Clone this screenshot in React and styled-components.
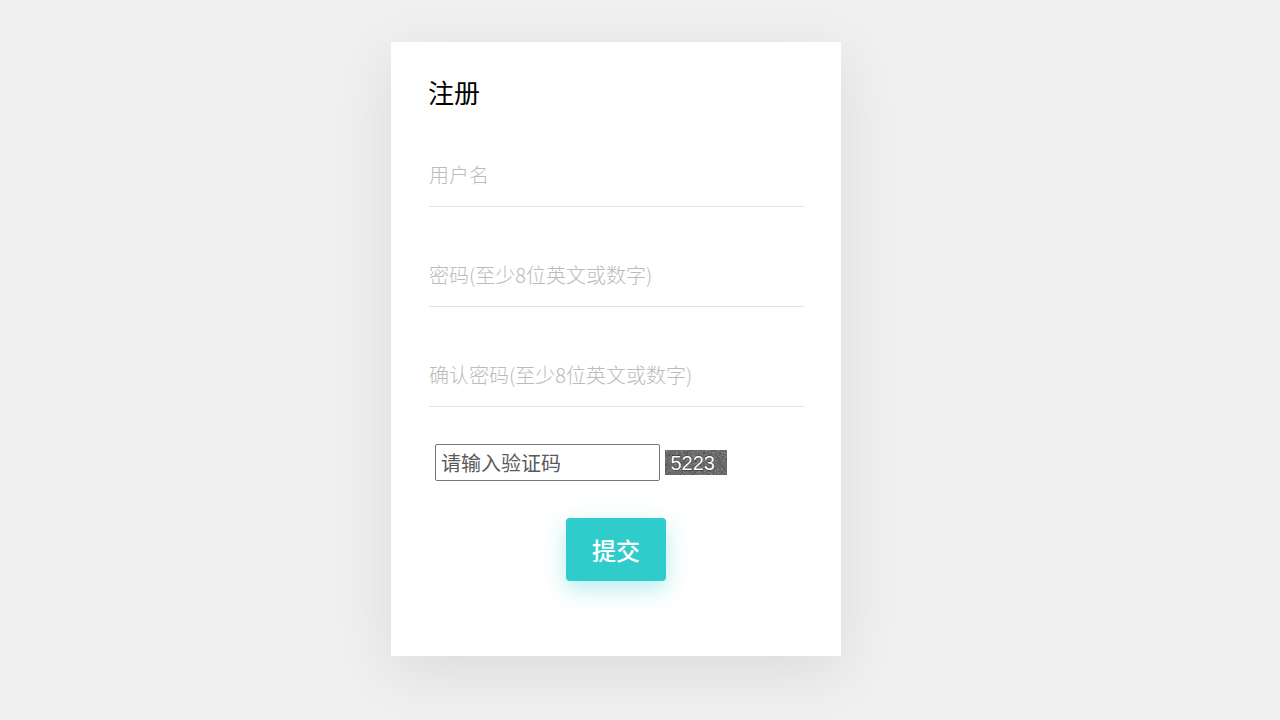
import React from "react";
import styled, { createGlobalStyle } from "styled-components";

const Global = createGlobalStyle`
  html, body { margin: 0; padding: 0; background: #f0f0f0; }
  body { font-family: "Noto Sans CJK SC", "Liberation Sans", sans-serif; }
  * { box-sizing: border-box; }
`;

const Page = styled.div`
  display: flex;
  justify-content: center;
  padding: 42px 48px 0 0;
  min-height: 720px;
`;

const Card = styled.form`
  width: 450px;
  height: 614px;
  background: #fff;
  padding: 30px 37px 0 38px;
  box-shadow: 0 15px 60px rgba(0, 0, 0, 0.09);
  display: flex;
  flex-direction: column;
`;

const Title = styled.h2`
  margin: 0 0 0 -1px;
  font-size: 26px;
  line-height: 40px;
  font-weight: 400;
  color: #000;
`;

const Field = styled.input`
  display: block;
  width: 100%;
  height: 61px;
  margin-top: ${(p) => p.$gap}px;
  border: none;
  border-bottom: 1px solid #e3e3e3;
  outline: none;
  padding: 0 0 3px;
  font-family: inherit;
  font-size: 20px;
  font-weight: 300;
  color: #333;
  background: transparent;
  &::placeholder { color: #bbbbbb; }
`;

const CaptchaRow = styled.div`
  display: flex;
  align-items: center;
  gap: 5px;
  margin-top: 37px;
  padding-left: 6px;
`;

const CaptchaInput = styled.input`
  width: 225px;
  height: 37px;
  border: 1px solid #767676;
  border-radius: 2px;
  padding: 0 5px;
  font-family: inherit;
  font-size: 20px;
  color: #333;
  outline: none;
  &::placeholder { color: #5a5a5a; }
`;

const CaptchaImg = styled.svg`
  display: block;
  width: 62px;
  height: 25px;
`;

const Submit = styled.button`
  align-self: center;
  margin: 37px 0 0 -1px;
  width: 100px;
  height: 63px;
  border: none;
  border-radius: 4px;
  background: #30cccc;
  color: #fff;
  font-family: inherit;
  font-size: 24px;
  font-weight: 500;
  cursor: pointer;
  box-shadow: 0 8px 22px rgba(48, 204, 204, 0.35);
`;

function rand(seed) {
  let s = seed;
  return () => {
    s = (s * 9301 + 49297) % 233280;
    return s / 233280;
  };
}

function Captcha() {
  const r = rand(7);
  const dots = [];
  for (let i = 0; i < 420; i++) {
    const g = Math.floor(60 + r() * 110);
    dots.push(
      <rect key={i} x={(r() * 62).toFixed(1)} y={(r() * 25).toFixed(1)} width="1" height="1" fill={`rgb(${g},${g},${g})`} />
    );
  }
  return (
    <CaptchaImg viewBox="0 0 62 25">
      <rect width="62" height="25" fill="#696969" />
      {dots}
      <path d="M2 21 L60 5" stroke="#8a8a8a" strokeWidth="0.6" />
      <path d="M50 2 L61 22" stroke="#505050" strokeWidth="0.6" />
      <text
        x="5.5"
        y="19.5"
        fontFamily="'Liberation Sans', Arial, sans-serif"
        fontSize="20"
        fill="#fff"
        stroke="#2a2a2a"
        strokeWidth="0.9"
        paintOrder="stroke"
      >
        5223
      </text>
    </CaptchaImg>
  );
}

export default function App() {
  return (
    <>
      <Global />
      <Page>
        <Card onSubmit={(e) => e.preventDefault()}>
          <Title>注册</Title>
          <Field $gap={34} placeholder="用户名" />
          <Field $gap={39} type="password" placeholder="密码(至少8位英文或数字)" />
          <Field $gap={39} type="password" placeholder="确认密码(至少8位英文或数字)" />
          <CaptchaRow>
            <CaptchaInput placeholder="请输入验证码" />
            <Captcha />
          </CaptchaRow>
          <Submit type="submit">提交</Submit>
        </Card>
      </Page>
    </>
  );
}
